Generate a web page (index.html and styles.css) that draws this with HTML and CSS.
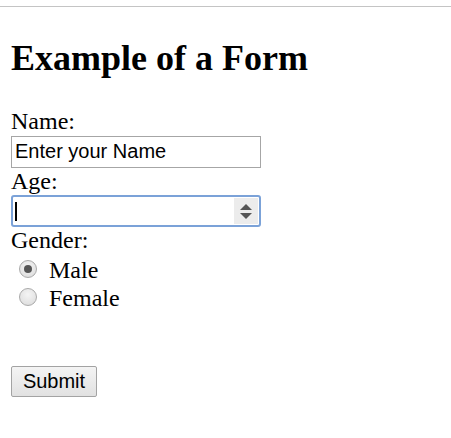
FILE: index.html
```html
<!DOCTYPE html>
<html>
<head>
<meta charset="utf-8">
<title>Example of a Form</title>
<link rel="stylesheet" href="styles.css">
</head>
<body>
<div class="topline"></div>
<div class="page">
  <h2 class="title">Example of a Form</h2>
  <form class="form">
    <label class="label" for="name">Name:</label>
    <input class="text-input" id="name" type="text" value="Enter your Name">
    <label class="label" for="age">Age:</label>
    <div class="number-wrap">
      <input class="number-input" id="age" type="text" value="">
      <span class="caret"></span>
      <span class="spinner"><span class="tri-up"></span><span class="tri-down"></span></span>
    </div>
    <div class="label">Gender:</div>
    <div class="radios">
      <label class="radio-row"><span class="radio checked"></span><span>Male</span></label>
      <label class="radio-row"><span class="radio"></span><span>Female</span></label>
    </div>
    <button class="submit" type="button">Submit</button>
  </form>
</div>
</body>
</html>
```
FILE: styles.css
```css
html, body {
  margin: 0;
  padding: 0;
  background: #ffffff;
}
body {
  font-family: "Liberation Serif", "Times New Roman", serif;
  font-size: 24px;
  color: #000;
}
.topline {
  height: 6px;
  border-bottom: 1px solid #c4c4c4;
}
.page {
  padding: 0 12px 0 11px;
}
.title {
  font-size: 36px;
  font-weight: bold;
  margin: 30px 0 29px 0;
  line-height: normal;
}
.form {
  display: flex;
  flex-direction: column;
  align-items: flex-start;
}
.label {
  display: block;
  line-height: 27.6px;
  height: 27.6px;
}
.text-input {
  box-sizing: border-box;
  width: 250px;
  height: 32px;
  margin: 0;
  padding: 0 0 0 3px;
  border: 1px solid #a6a6a6;
  border-radius: 0;
  font-family: "Liberation Sans", Arial, sans-serif;
  font-size: 20px;
  color: #000;
  background: #fff;
  outline: none;
}
.number-wrap {
  position: relative;
  width: 250px;
  height: 32px;
}
.number-input {
  box-sizing: border-box;
  width: 250px;
  height: 32px;
  margin: 0;
  padding: 0 0 0 3px;
  border: 2px solid #7ba2d8;
  border-radius: 3px;
  font-family: "Liberation Sans", Arial, sans-serif;
  font-size: 20px;
  background: #fff;
  outline: none;
}
.caret {
  position: absolute;
  left: 4px;
  top: 7px;
  width: 2px;
  height: 19px;
  background: #000;
}
.spinner {
  position: absolute;
  right: 3px;
  top: 3px;
  bottom: 3px;
  width: 24px;
  background: #ececec;
}
.tri-up, .tri-down {
  position: absolute;
  left: 6px;
  width: 0;
  height: 0;
  border-left: 6px solid transparent;
  border-right: 6px solid transparent;
}
.tri-up {
  top: 6px;
  border-bottom: 6px solid #555;
}
.tri-down {
  top: 15px;
  border-top: 6px solid #555;
}
.radios {
  margin-top: 2px;
  display: flex;
  flex-direction: column;
}
.radio-row {
  display: flex;
  align-items: center;
  height: 28px;
}
.radio {
  box-sizing: border-box;
  width: 18px;
  height: 18px;
  margin: -3px 12px 0 8px;
  border: 1px solid #a9a9a9;
  border-radius: 50%;
  background: radial-gradient(circle at 50% 35%, #f4f4f4 0%, #e2e2e2 70%, #d6d6d6 100%);
  position: relative;
}
.radio.checked::after {
  content: "";
  position: absolute;
  left: 4px;
  top: 4px;
  width: 8px;
  height: 8px;
  border-radius: 50%;
  background: #555;
}
.submit {
  box-sizing: border-box;
  margin-top: 53px;
  width: 86px;
  height: 31px;
  padding: 0;
  border: 1px solid #a3a3a3;
  border-radius: 2px;
  background: linear-gradient(#f4f4f4, #e1e1e1);
  font-family: "Liberation Sans", Arial, sans-serif;
  font-size: 20px;
  color: #000;
}
```
